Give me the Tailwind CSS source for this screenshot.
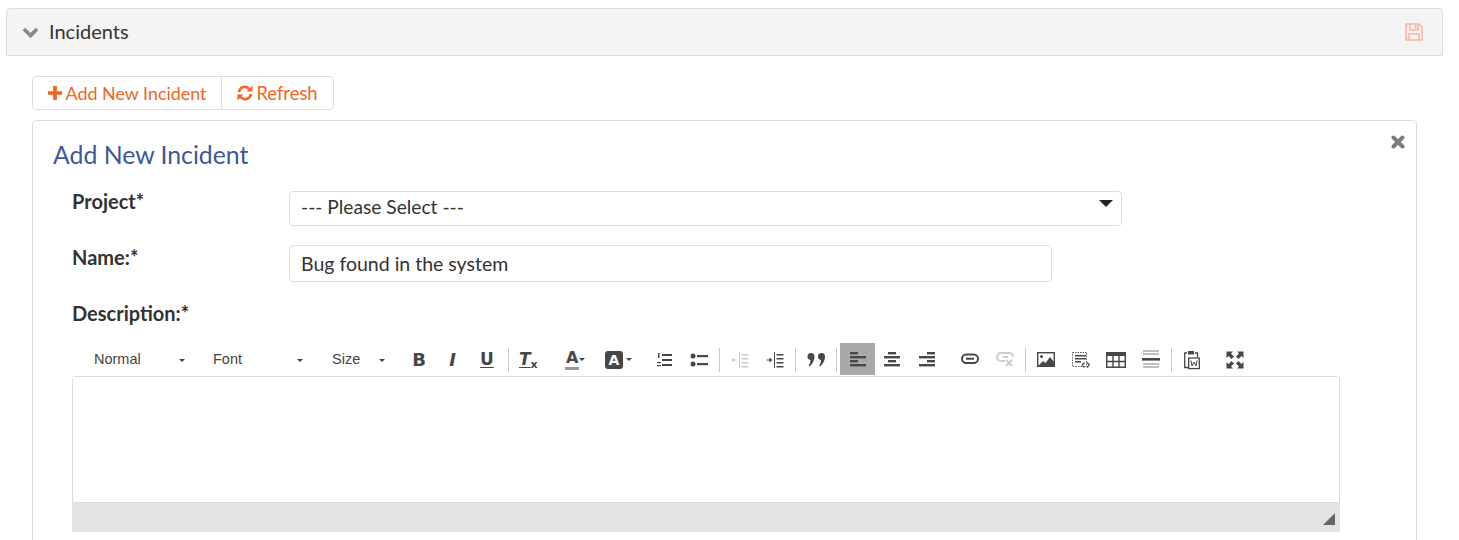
<!DOCTYPE html>
<html lang="en">

<head>
    <meta charset="UTF-8">
    <title>Incidents</title>
    <script src="https://cdn.jsdelivr.net/npm/@tailwindcss/browser@4"></script>
</head>

<body class="bg-white">
    <div class="h-[540px] overflow-hidden pt-[8px] pl-[6px] font-['Lato',sans-serif] text-[#333]">
        <!-- panel header -->
        <div class="w-[1437px] h-[48px] flex items-center bg-[#f4f4f4] border border-[#ddd] rounded-t-[4px] pl-[15px] pr-[19px]">
            <svg class="w-[17px] h-[11px] mt-[1px]" viewBox="0 0 17 11"><path d="M2 2l6.500 6.500L15 2" fill="none" stroke="#8a8a8a" stroke-width="3.800"/></svg>
            <span class="ml-[10px] -mt-[2px] text-[20px] leading-none">Incidents</span>
            <svg class="ml-auto w-[18px] h-[18px]" viewBox="0 0 18 18" fill="none" stroke="#fbb39c" stroke-width="1.500"><path d="M1 1h13l3 3v13H1z"/><path d="M5 1v6h8V1"/><path d="M4 17v-6h10v6"/><path d="M9.500 2.500v3h2v-3z" fill="#fbb39c" stroke="none"/></svg>
        </div>

        <div class="ml-[26px] mt-[20px]">
            <!-- button group -->
            <div class="flex w-[302px] h-[34px] border border-[#ddd] rounded-[4px] text-[#f26522]">
                <button class="w-[189px] flex items-center justify-center gap-[4px] border-r border-[#ddd] text-[17.900px]">
                    <svg class="w-[14px] h-[14px]" viewBox="0 0 15 15"><path d="M5.500 0h4v5.500H15v4H9.500V15h-4V9.500H0v-4h5.500z" fill="#f26522"/></svg>
                    Add New Incident
                </button>
                <button class="flex-1 flex items-center justify-center gap-[3px] text-[18.400px]">
                    <svg class="w-[16px] h-[16px]" viewBox="0 0 16 16" fill="none" stroke="#f26522" stroke-width="2.600"><path d="M2 7a6 6 0 0 1 10.500-3"/><path d="M14 9a6 6 0 0 1-10.500 3"/><path d="M15.500 0.500v6h-6z M0.500 15.500v-6h6z" fill="#f26522" stroke="none"/></svg>
                    <span class="pt-[2px]">Refresh</span>
                </button>
            </div>

            <!-- card -->
            <div class="relative w-[1385px] h-[500px] mt-[10px] border border-[#ddd] rounded-[4px] pl-[20px]">
                <svg class="absolute right-[11px] top-[14px] w-[14px] h-[14px]" viewBox="0 0 14 14"><path d="M2.500 2.500l9 9M11.500 2.500l-9 9" stroke="#7d7d7d" stroke-width="4" stroke-linecap="round"/></svg>
                <h2 class="pt-[19px] text-[24.800px] leading-[30px] text-[#3b5998]">Add New Incident</h2>

                <div class="pl-[19px]">
                    <div class="grid grid-cols-[217px_1fr] mt-[21px]">
                        <label class="text-[20px] font-bold leading-[30px] -mt-[5px]">Project*</label>
                        <div class="relative w-[833px]">
                            <select class="appearance-none w-full h-[35px] pb-[2px] border border-[#ddd] rounded-[4px] pl-[11px] text-[19.200px] bg-white">
                                <option>--- Please Select ---</option>
                            </select>
                            <span class="absolute right-[9px] top-[9px] w-0 h-0 border-x-[7px] border-x-transparent border-t-[7px] border-t-[#222]"></span>
                        </div>
                    </div>

                    <div class="grid grid-cols-[217px_1fr] mt-[19px]">
                        <label class="text-[20px] font-bold leading-[30px] -mt-[3px]">Name:*</label>
                        <input type="text" value="Bug found in the system" class="w-[763px] h-[37px] border border-[#ddd] rounded-[4px] pl-[11px] text-[19.500px]">
                    </div>

                    <label class="block mt-[16px] text-[20px] font-bold leading-[30px]">Description:*</label>

                    <!-- toolbar -->
                    <div class="flex items-center h-[33px] mt-[15px] text-[#444]">
                        <div class="flex items-center w-[119px] pl-[22px] pt-[1px] font-['Liberation_Sans',sans-serif] text-[14.500px]">Normal<span class="ml-auto mr-[6px] w-0 h-0 border-x-[3px] border-x-transparent border-t-[3px] border-t-[#444]"></span></div>
                        <div class="flex items-center w-[119px] pl-[22px] pt-[1px] font-['Liberation_Sans',sans-serif] text-[14.500px]">Font<span class="ml-auto mr-[7px] w-0 h-0 border-x-[3px] border-x-transparent border-t-[3px] border-t-[#444]"></span></div>
                        <div class="flex items-center w-[75px] pl-[22px] pt-[1px] font-['Liberation_Sans',sans-serif] text-[14.500px]">Size<span class="ml-auto w-0 h-0 border-x-[3px] border-x-transparent border-t-[3px] border-t-[#444]"></span></div>

                        <div class="flex items-center h-full ml-[17px] font-['DejaVu_Sans',sans-serif] text-[#474747]">
                            <span class="w-[34px] text-center text-[18px] font-bold">B</span>
                            <span class="w-[33px] text-center text-[18px] font-bold italic">I</span>
                            <span class="w-[36px] text-center text-[17px] font-bold underline underline-offset-2">U</span>
                            <span class="w-px h-[24px] bg-[#ccc] ml-[3px]"></span>
                            <span class="w-[41px] pl-[10px] text-[17px] font-bold italic underline underline-offset-2">T<span class="text-[11px] not-italic no-underline inline-block translate-y-[3px]">x</span></span>
                            <span class="w-[33px] pl-[15px] text-[16px] font-bold leading-[18px]"><span class="inline-block border-b-[3px] border-[#999] px-[1px]">A</span></span>
                            <span class="w-0 h-0 -ml-[4px] -mr-[2px] border-x-[3px] border-x-transparent border-t-[3px] border-t-[#444]"></span>
                            <span class="ml-[22px] w-[18px] h-[18px] bg-[#474747] rounded-[3px] text-white text-center text-[14px] font-bold leading-[18px]">A</span>
                            <span class="ml-[3px] w-0 h-0 border-x-[3px] border-x-transparent border-t-[3px] border-t-[#444]"></span>
                        </div>

                        <!-- lists -->
                        <svg class="w-[16px] h-[16px] ml-[24px]" viewBox="0 0 16 16" fill="#474747"><rect x="6" y="2" width="10" height="2"/><rect x="6" y="7" width="10" height="2"/><rect x="6" y="12" width="10" height="2"/><rect x="2" y="1" width="1.500" height="5"/><rect x="1" y="10" width="4" height="1.200"/><rect x="1" y="13" width="4" height="1.200"/></svg>
                        <svg class="w-[18px] h-[16px] ml-[18px]" viewBox="0 0 18 16" fill="#474747"><circle cx="3" cy="4" r="2.500"/><circle cx="3" cy="12" r="2.500"/><rect x="7" y="3" width="11" height="2.200"/><rect x="7" y="11" width="11" height="2.200"/></svg>
                        <span class="w-px h-[24px] bg-[#ccc] ml-[11px]"></span>

                        <!-- indent -->
                        <svg class="w-[18px] h-[16px] ml-[11px]" viewBox="0 0 18 16" fill="#ccc"><rect x="8" y="0" width="1" height="16"/><rect x="10.500" y="2" width="7" height="1.500"/><rect x="10.500" y="6" width="7" height="1.500"/><rect x="10.500" y="10" width="7" height="1.500"/><rect x="10.500" y="14" width="7" height="1.500"/><path d="M0 8l3-2.500v2h3v1H3v2z"/></svg>
                        <svg class="w-[18px] h-[16px] ml-[17px]" viewBox="0 0 18 16" fill="#474747"><rect x="8" y="0" width="1" height="16"/><rect x="10.500" y="2" width="7" height="1.500"/><rect x="10.500" y="6" width="7" height="1.500"/><rect x="10.500" y="10" width="7" height="1.500"/><rect x="10.500" y="14" width="7" height="1.500"/><path d="M6.500 8l-3-2.500v2h-3v1h3v2z"/></svg>
                        <span class="w-px h-[24px] bg-[#ccc] ml-[11px]"></span>

                        <!-- quote -->
                        <svg class="w-[19px] h-[14px] ml-[11px]" viewBox="0 0 19 14" fill="#474747"><path d="M0.500 3.500a3.500 3.500 0 0 1 7 0c0 4-2.500 8-5 10l-0.800-1c1-1.300 1.700-3 1.800-5.500a3.500 3.500 0 0 1-3-3.500z"/><path d="M11 3.500a3.500 3.500 0 0 1 7 0c0 4-2.500 8-5 10l-0.800-1c1-1.300 1.700-3 1.800-5.500a3.500 3.500 0 0 1-3-3.500z"/></svg>
                        <span class="w-px h-[24px] bg-[#ccc] ml-[10px]"></span>

                        <!-- align -->
                        <div class="flex items-center justify-center w-[35px] h-[32px] ml-[3px] -mt-[1px] bg-[#a9a9a9]">
                            <svg class="w-[16px] h-[15px]" viewBox="0 0 16 15" fill="#474747"><rect x="0" y="0" width="8" height="2.400"/><rect x="0" y="4" width="16" height="2.400"/><rect x="0" y="8" width="8" height="2.400"/><rect x="0" y="12" width="16" height="2.400"/></svg>
                        </div>
                        <svg class="w-[16px] h-[15px] ml-[9px]" viewBox="0 0 16 15" fill="#474747"><rect x="4" y="0" width="8" height="2.400"/><rect x="0" y="4" width="16" height="2.400"/><rect x="4" y="8" width="8" height="2.400"/><rect x="0" y="12" width="16" height="2.400"/></svg>
                        <svg class="w-[16px] h-[15px] ml-[19px]" viewBox="0 0 16 15" fill="#474747"><rect x="8" y="0" width="8" height="2.400"/><rect x="0" y="4" width="16" height="2.400"/><rect x="8" y="8" width="8" height="2.400"/><rect x="0" y="12" width="16" height="2.400"/></svg>

                        <!-- link / unlink -->
                        <svg class="w-[18px] h-[12px] ml-[26px] -mt-[1px]" viewBox="0 0 18 12" fill="none" stroke="#474747" stroke-width="2"><rect x="1" y="1.500" width="16" height="8.500" rx="4.200"/><path d="M5 5.700h8"/></svg>
                        <svg class="w-[18px] h-[15px] ml-[17px]" viewBox="0 0 18 15" fill="none" stroke="#ccc" stroke-width="2"><path d="M9 9H5a4 4 0 0 1 0-8h8a4 4 0 0 1 4 4"/><path d="M7 5h5"/><path d="M10 8l6 6M16 8l-6 6"/></svg>
                        <span class="w-px h-[24px] bg-[#ccc] ml-[11px]"></span>

                        <!-- image, embed, table, hr -->
                        <svg class="w-[18px] h-[15px] ml-[11px]" viewBox="0 0 18 15"><rect x="0.700" y="0.700" width="16.600" height="13.600" fill="none" stroke="#474747" stroke-width="1.400"/><circle cx="4.500" cy="4.500" r="1.500" fill="#474747"/><path d="M1 14l5-5 2.500 2L13 5l4 5v4z" fill="#474747"/></svg>
                        <svg class="w-[18px] h-[16px] ml-[17px]" viewBox="0 0 18 16" fill="#474747"><path d="M0.500 0.500h14v14h-14z" fill="none" stroke="#666" stroke-dasharray="1.500 1"/><rect x="3" y="3" width="11" height="1.500"/><rect x="3" y="6" width="11" height="1.500"/><rect x="3" y="9" width="6" height="1.500"/><path d="M10 13l2.500-2.500M10 13l2.500 2.500M17.500 13L15 10.500M17.500 13L15 15.500" stroke="#474747" stroke-width="1.300" fill="none"/></svg>
                        <svg class="w-[20px] h-[16px] ml-[16px]" viewBox="0 0 20 16"><rect x="0" y="0" width="20" height="4" fill="#474747"/><path d="M0.700 1v14.300h18.600V1M7 4v11M13 4v11M1 9.500h18" fill="none" stroke="#474747" stroke-width="1.400"/></svg>
                        <svg class="w-[18px] h-[19px] ml-[16px]" viewBox="0 0 18 19"><path d="M1 1h16M1 4h16M1 14h16M1 17h16" stroke="#aaa" stroke-width="1.300"/><rect x="0" y="8" width="18" height="2.600" fill="#474747"/></svg>
                        <span class="w-px h-[24px] bg-[#ccc] ml-[11px]"></span>

                        <!-- paste word, maximize -->
                        <svg class="w-[18px] h-[20px] ml-[11px]" viewBox="0 0 18 20" fill="none" stroke="#474747" stroke-width="1.300"><path d="M4 3H1.700v14.500H5"/><path d="M12 3h2.500v4"/><rect x="5" y="1" width="6" height="3.500" fill="#474747" stroke="none"/><rect x="5.700" y="8" width="10.600" height="10.600"/><path d="M8 10.500l1 5.500 2-4 2 4 1-5.500" stroke-width="1"/></svg>
                        <svg class="w-[18px] h-[18px] ml-[25px]" viewBox="0 0 18 18" fill="#474747"><path d="M0.500 0.500h6.500L5 2.500 8 5.500 5.500 8 2.500 5 0.500 7z"/><path d="M17.500 0.500H11L13 2.500 10 5.500 12.500 8l3-3 2 2z"/><path d="M0.500 17.500h6.500L5 15.500l3-3L5.500 10l-3 3-2-2z"/><path d="M17.500 17.500H11L13 15.500l-3-3L12.500 10l3 3 2-2z"/></svg>
                    </div>

                    <!-- editor -->
                    <div class="w-[1268px] h-[156px] border-x border-t border-[#ddd] rounded-t-[4px] flex flex-col">
                        <div class="flex-1 bg-white"></div>
                        <div class="relative h-[30px] bg-[#e3e3e3] border-t border-[#ddd] -mx-px">
                            <span class="absolute right-[5px] bottom-[7px] w-0 h-0 border-l-[12px] border-l-transparent border-b-[12px] border-b-[#666]"></span>
                        </div>
                    </div>
                </div>
            </div>
        </div>
    </div>
</body>

</html>
